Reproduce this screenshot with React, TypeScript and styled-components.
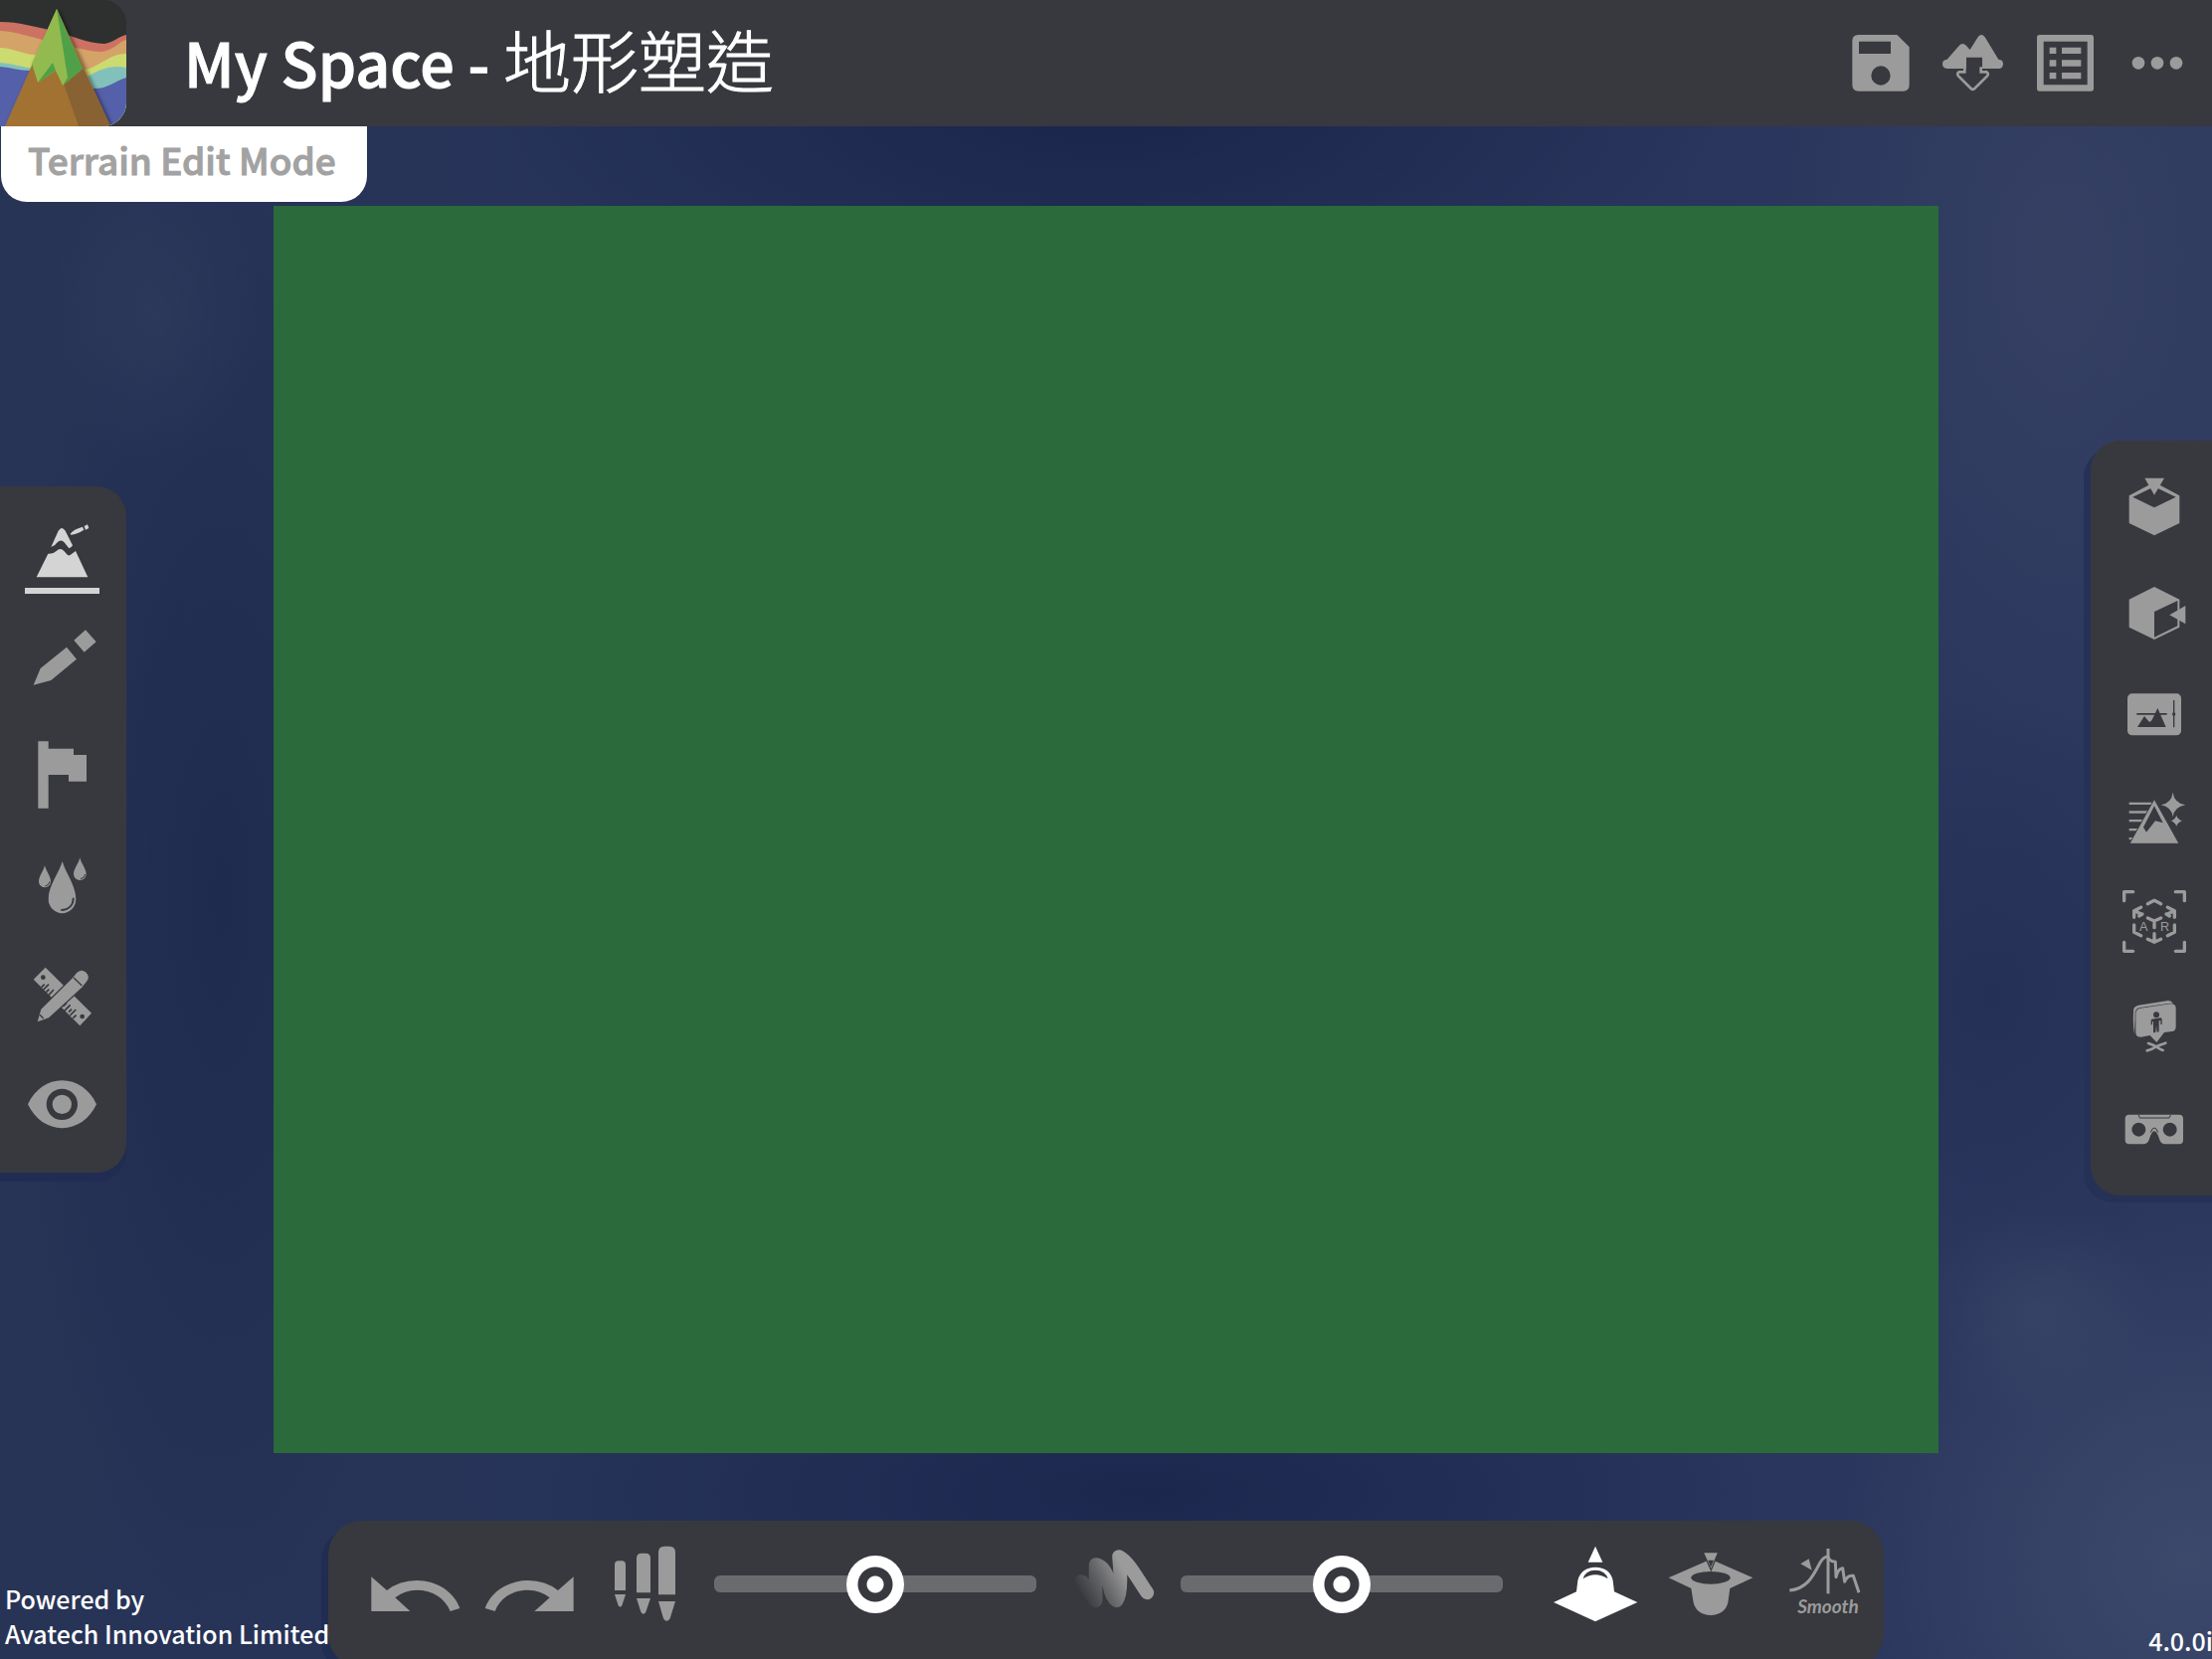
import React, { useState } from "react";
import styled, { createGlobalStyle } from "styled-components";

const PANEL = "#38393e";
const ICON = "#9b9b9b";
const SHADE = "#212c52";
const SANS = '"Noto Sans CJK TC", "Noto Sans CJK SC", "Noto Sans", sans-serif';

const GlobalStyle = createGlobalStyle`
  *, *::before, *::after { box-sizing: border-box; }
  body { margin: 0; background: #27335a; font-family: ${SANS}; }
  button { font: inherit; }
`;

const Page = styled.div`
  position: relative;
  display: flex;
  flex-direction: column;
  min-height: 100vh;
  overflow: hidden;
  background:
    radial-gradient(ellipse 120px 110px at 92% 79%, rgba(70, 80, 112, 0.35), transparent),
    radial-gradient(ellipse 360px 340px at 99% 94%, rgba(72, 84, 116, 0.6), transparent),
    radial-gradient(ellipse 300px 520px at 93% 16%, rgba(62, 72, 104, 0.5), transparent),
    radial-gradient(ellipse 110px 160px at 7% 19%, rgba(54, 64, 98, 0.45), transparent),
    radial-gradient(ellipse 620px 240px at 50% 6%, rgba(24, 36, 72, 0.9), transparent),
    radial-gradient(ellipse 220px 760px at 10% 54%, rgba(28, 40, 76, 0.8), transparent),
    radial-gradient(ellipse 240px 300px at 90% 60%, rgba(32, 44, 82, 0.6), transparent),
    radial-gradient(ellipse 620px 180px at 52% 90%, rgba(26, 38, 76, 0.9), transparent),
    linear-gradient(90deg, #273456 0%, #26325a 50%, #2c385e 100%);
`;

const Header = styled.header`
  display: flex;
  align-items: center;
  height: 127px;
  padding-right: 8px;
  background: ${PANEL};
`;

const LogoButton = styled.button`
  width: 127px;
  height: 127px;
  padding: 0;
  border: 0;
  border-radius: 0 24px 24px 0;
  overflow: hidden;
  background: #2e302f;
  cursor: pointer;
  svg { display: block; width: 100%; height: 100%; }
`;

const Title = styled.h1`
  flex: 1;
  margin: 0;
  padding: 0 0 6px 58px;
  color: #fff;
  font-size: 61px;
  font-weight: 500;
  line-height: 90px;
  white-space: pre;
  -webkit-text-stroke: 1px currentColor;
`;

const TitleMode = styled.span`
  font-size: 68px;
  font-weight: 300;
`;

const ToolButton = styled.button<{ $w: number; $h: number; $on?: boolean }>`
  flex: none;
  width: ${(p) => p.$w}px;
  height: ${(p) => p.$h}px;
  padding: 0;
  border: 0;
  background: none;
  color: ${(p) => (p.$on ? "#fff" : ICON)};
  cursor: pointer;
  svg { display: block; height: 100%; margin: 0 auto; }
`;

const HeaderTools = styled.nav`
  display: flex;
`;

const Main = styled.main`
  flex: 1;
  display: grid;
  grid-template-columns: 275px 1fr 275px;
  align-items: center;
  padding: 80px 0 68px;
`;

const Canvas = styled.section`
  align-self: stretch;
  background: #2b6a3a;
`;

const Rail = styled.nav<{ $side: "left" | "right" }>`
  display: flex;
  flex-direction: column;
  justify-self: ${(p) => (p.$side === "left" ? "start" : "end")};
  width: ${(p) => (p.$side === "left" ? 127 : 122)}px;
  padding: ${(p) => (p.$side === "left" ? "12px 0" : "16px 0 15px")};
  margin-bottom: ${(p) => (p.$side === "left" ? 0 : 24)}px;
  border-radius: ${(p) => (p.$side === "left" ? "0 30px 30px 0" : "30px 0 0 30px")};
  background: ${PANEL};
  box-shadow: ${(p) =>
    p.$side === "left" ? `0 9px 0 ${SHADE}` : `-7px 7px 0 #263157, 0 7px 0 #263157`};
`;

const Toolbar = styled.div`
  display: flex;
  align-self: center;
  width: 1564px;
  max-width: 100%;
  height: 148px;
  margin-bottom: -9px;
  padding: 23px 3px 0 30px;
  border-radius: 34px;
  background: ${PANEL};
  box-shadow: -7px 7px 0 ${SHADE};
`;

const Slider = styled.input`
  flex: 1;
  min-width: 0;
  height: 58px;
  margin: 11px 8px 0;
  appearance: none;
  background: none;
  cursor: pointer;
  &:first-of-type { margin-left: 13px; margin-right: 22px; }
  &:last-of-type { margin-right: 35px; }
  &::-webkit-slider-runnable-track {
    height: 17px;
    border-radius: 6px;
    background: #6a6b6f;
  }
  &::-webkit-slider-thumb {
    appearance: none;
    width: 58px;
    height: 58px;
    margin-top: -20px;
    border-radius: 50%;
    background: radial-gradient(circle, #fff 8px, ${PANEL} 9px, ${PANEL} 17px, #fff 18px);
  }
`;

const ModeChip = styled.div`
  position: absolute;
  top: 127px;
  left: 1px;
  padding: 0 31px 0 27px;
  height: 76px;
  border-radius: 0 0 26px 26px;
  background: #fff;
  color: #a2a2a2;
  font-size: 37px;
  font-weight: 500;
  line-height: 66px;
  white-space: nowrap;
  -webkit-text-stroke: 1px currentColor;
`;

const Credits = styled.p`
  position: absolute;
  left: 5px;
  bottom: 8px;
  margin: 0;
  color: #fff;
  font-size: 25px;
  font-weight: 500;
  line-height: 35px;
`;

const Version = styled.p`
  position: absolute;
  right: -1px;
  bottom: 1px;
  margin: 0;
  color: #fff;
  font-size: 25px;
  font-weight: 500;
  line-height: 35px;
`;

type IconProps = { box: string; children: React.ReactNode };

const Icon = ({ box, children }: IconProps) => (
  <svg viewBox={box} fill="currentColor" stroke="none" aria-hidden="true">
    {children}
  </svg>
);

const Logo = () => (
  <svg viewBox="0 0 127 127" aria-hidden="true">
    <defs>
      <filter id="peakShadow" x="-20%" y="-20%" width="140%" height="140%">
        <feDropShadow dx="2" dy="1" stdDeviation="2" floodOpacity="0.5" />
      </filter>
    </defs>
    <rect width="127" height="127" fill="#2e302f" />
    <path d="M0 22C20 22 34 27 50 30C72 35 88 44 105 44C114 43 120 36 127 35V127H0Z" fill="#cc7263" />
    <path d="M0 31C18 32 32 38 48 41C68 45 86 52 102 52C114 51 119 42 127 40V127H0Z" fill="#d4a368" />
    <path d="M0 48C12 48 22 54 34 55C54 58 70 74 90 69C104 63 114 53 127 54V127H0Z" fill="#cbdb70" />
    <path d="M0 63C12 64 22 67 32 69L88 77C102 69 112 65 127 68V127H0Z" fill="#82c1bb" />
    <path d="M0 67C12 68 20 71 30 71L92 89C108 90 114 82 127 78V127H0Z" fill="#5560aa" />
    <g filter="url(#peakShadow)">
      <path d="M57 9L111 127H5Z" fill="#a17233" />
      <path d="M57 9L84 69L111 127H79L64 84Z" fill="#886230" />
      <path d="M57 9L83 69L63 86L56 71L38 83L32 64Z" fill="#93ba4f" />
      <path d="M57 9L83 69L63 86L68 78Z" fill="#50a147" />
      <path d="M53 63L56 71L38 83Z" fill="#50a147" />
    </g>
  </svg>
);

const SaveIcon = () => (
  <Icon box="72 51 279 279">
    <path
      fillRule="evenodd"
      d="M146 105H262L299 142V256Q299 275 280 275H146Q127 275 127 256V124Q127 105 146 105ZM147 125V162H243V125ZM213 199A29 29 0 1 0 213 257A29 29 0 1 0 213 199Z"
    />
  </Icon>
);

const DownloadTerrainIcon = () => (
  <Icon box="351 51 279 279">
    <path d="M413 179L449 138Q460 126 471 138L482 150L506 112Q516 98 527 112L568 179Q582 180 582 193Q582 207 568 207H519V173H471V207H413Q399 206 399 193Q399 180 413 179Z" />
    <path
      d="M466 202V217H449Q441 222 447 229L485 267Q490 272 496 267L534 229Q540 222 532 217H515V202"
      fill="none"
      stroke="currentColor"
      strokeWidth="8"
    />
  </Icon>
);

const ListIcon = () => (
  <Icon box="630 51 279 279">
    <path
      fillRule="evenodd"
      d="M692 105H847Q855 105 855 113V267Q855 275 847 275H692Q684 275 684 267V113Q684 105 692 105ZM704 125V256H836V125Z"
    />
    <path d="M722 143H742V162H722ZM759 143H817V162H759ZM722 181H742V200H722ZM759 181H817V200H759ZM722 219H742V238H722ZM759 219H817V238H759Z" />
  </Icon>
);

const MoreIcon = () => (
  <Icon box="909 51 279 279">
    <circle cx="990" cy="190" r="19" />
    <circle cx="1047" cy="190" r="19" />
    <circle cx="1104" cy="190" r="19" />
  </Icon>
);

const SculptIcon = () => (
  <Icon box="24 63 333 333">
    <g fill="#d4d4d4">
      <path d="M154 210L176 161Q186 145 197 161L219 205Q215 213 208 214L195 197Q184 184 173 196Q167 206 154 210Z" />
      <path d="M110 301L145 230Q160 232 170 222Q182 210 193 222L203 233Q209 238 215 232L228 222L265 301Z" />
      <path d="M212 170Q221 157 249 149L253 158Q232 172 214 173ZM254 147L264 142L268 153L258 158Z" />
      <path d="M75 333H300V351H75Z" />
    </g>
  </Icon>
);

const PencilIcon = () => (
  <Icon box="24 396 333 333">
    <path d="M258 460L290 496L254 527L223 491ZM201 512L231 548L154 612L101 626L122 576Z" />
  </Icon>
);

const FlagIcon = () => (
  <Icon box="24 729 333 333">
    <path d="M115 796H146V818H222V837H261V917H207V897H146V998H115Z" />
  </Icon>
);

const DropsIcon = () => (
  <Icon box="24 -18 333 333">
    <path d="M188 78C196 110 229 150 229 192A41 42 0 0 1 146 192C146 150 180 110 188 78Z" />
    <path d="M135 90C138 106 153 122 153 139A18 18 0 0 1 117 139C117 122 132 106 135 90Z" />
    <path d="M241 67C244 84 260 100 260 117A19 18 0 0 1 222 117C222 100 238 84 241 67Z" />
    <g fill="none" stroke={PANEL}>
      <path d="M221 188C221 210 207 224 184 225" strokeWidth="6" />
      <path d="M150 139Q149 150 136 153M257 117Q255 129 243 131" strokeWidth="3" />
    </g>
  </Icon>
);

const MeasureIcon = () => (
  <Icon box="24 315 333 333">
    <path d="M137 398L276 536L241 574L101 434Z" />
    <g fill="none" stroke={PANEL} strokeWidth="5">
      <path d="M125 458L134 449M131 465L147 449M139 473L148 464M147 481L162 465M190 516L201 505M194 529L212 511M207 533L216 524M211 543L229 525M220 551L230 542" />
    </g>
    <circle cx="130" cy="428" r="7" fill={PANEL} />
    <circle cx="248" cy="546" r="7" fill={PANEL} />
    <path
      d="M219 430L231 415Q244 401 258 412Q272 425 263 438L247 458L147 550L113 562L124 524Z"
      stroke={PANEL}
      strokeWidth="8"
      paintOrder="stroke"
    />
    <path d="M222 429L247 453M120 541L131 552" stroke={PANEL} strokeWidth="4" />
  </Icon>
);

const EyeIcon = () => (
  <Icon box="24 648 333 333">
    <path d="M84 811C105 765 145 739 187 739C230 739 270 765 291 811C270 856 230 883 187 883C145 883 105 856 84 811Z" />
    <circle cx="187" cy="811" r="38" fill="none" stroke={PANEL} strokeWidth="18" />
  </Icon>
);

const BoxTopIcon = () => (
  <Icon box="81 87 312 312">
    <path
      fillRule="evenodd"
      d="M246 164L322 205V288L246 325L170 288V205ZM246 178L181 209L246 241L311 209Z"
    />
    <path d="M217 152H276L246 203Z" />
  </Icon>
);

const BoxSideIcon = () => (
  <Icon box="81 399 312 312">
    <path
      fillRule="evenodd"
      d="M246 480L322 518V602L246 639L170 602V518ZM246 555V632L316 598V522Z"
    />
    <path d="M340 537V592L292 565Z" />
  </Icon>
);

const SceneIcon = () => (
  <Icon box="81 711 312 312">
    <rect x="165" y="802" width="162" height="126" rx="14" />
    <g fill={PANEL}>
      <path d="M195 903L216 870L229 886Q234 890 239 881L256 846L281 903Z" />
      <path d="M193 861H284V866H193ZM303 822H307V904H303Z" />
      <circle cx="305" cy="864" r="5" />
    </g>
  </Icon>
);

const GenerateIcon = () => (
  <Icon box="81 -117 312 312">
    <path d="M170 -10H242V-3H170ZM170 16H228V23H170ZM170 42H216V49H170ZM170 69H204V76H170ZM170 96H194V103H170Z" />
    <path d="M246 -20L321 115H171Z" stroke={PANEL} strokeWidth="3" />
    <path d="M246 1L272 52L249 46L222 80L213 65Z" fill={PANEL} />
    <path d="M302 -40Q306 -8 340 -2Q306 4 302 34Q298 4 266 -2Q298 -8 302 -40Z" />
    <path d="M313 24Q315 42 334 46Q315 50 313 68Q310 50 292 46Q310 42 313 24Z" stroke={PANEL} strokeWidth="3" />
  </Icon>
);

const ArIcon = () => (
  <Icon box="81 195 312 312">
    <g fill="none" stroke="currentColor" strokeLinejoin="round" strokeLinecap="round" strokeWidth="10">
      <path d="M155 287V260H182M310 260H337V287M155 412V439H182M310 439H337V412" />
      <path d="M226 296L246 286L266 296M185 360V382L206 392M307 360V382L286 392M246 386V410M226 403L246 412L266 403M246 368V348L226 339M246 348L266 339" />
      <path d="M185 337V317L206 307M185 317L209 328M200 333L210 327M307 337V317L286 307M307 317L283 328M292 333L282 327" />
    </g>
    <g fontFamily="Liberation Sans, sans-serif" fontWeight="400" fontSize="38" textAnchor="middle">
      <text x="214" y="378">A</text>
      <text x="278" y="378">R</text>
    </g>
  </Icon>
);

const AvatarSignIcon = () => (
  <Icon box="81 507 312 312">
    <path d="M186 690Q180 655 184 612Q187 604 198 602L288 588Q298 588 302 596L296 610L200 620Q188 624 189 640Z" />
    <path
      d="M204 611L294 598Q310 597 311 610V668Q310 680 299 681L276 684L253 714L233 693L206 698Q191 698 190 686V627Q191 613 204 611Z"
      stroke={PANEL}
      strokeWidth="4"
      paintOrder="stroke"
    />
    <g fill={PANEL}>
      <circle cx="252" cy="631" r="9" />
      <path d="M238 644L266 640Q269 641 269 646V660H265V648L260 649V682L254 683L252 664L250 684L243 685V651L240 652V661H236V648Z" />
    </g>
    <path d="M228 717Q244 722 253 728Q265 736 272 738M280 716Q260 722 250 728Q238 736 224 739" fill="none" stroke="currentColor" strokeWidth="8" strokeLinecap="round" />
  </Icon>
);

const HeadsetIcon = () => (
  <Icon box="81 819 312 312">
    <path
      fillRule="evenodd"
      d="M171 932H321Q333 932 333 944V1009Q333 1021 321 1021H278Q267 1021 262 1008Q254 982 246 982Q238 982 230 1008Q225 1021 213 1021H171Q158 1021 158 1009V944Q158 932 171 932ZM199 956A21 21 0 1 0 199 998A21 21 0 1 0 199 956ZM293 956A21 21 0 1 0 293 998A21 21 0 1 0 293 956Z"
    />
    <path d="M199 933L202 942H291L295 933M235 986Q239 972 246 972Q253 972 257 986" fill="none" stroke={PANEL} strokeWidth="3" />
  </Icon>
);

const UndoIcon = () => (
  <Icon box="180 126 345 240">
    <path d="M220 226L267 267Q305 237 357 237C417 237 470 272 487 321L458 330C442 290 405 266 357 266Q320 266 292 289L337 330H220Z" />
  </Icon>
);

const RedoIcon = () => (
  <Icon box="525 126 345 240">
    <path d="M830 226L783 267Q745 237 693 237C633 237 580 272 563 321L593 330C608 290 645 266 693 266Q730 266 758 289L712 330H830Z" />
  </Icon>
);

const BrushSizeIcon = () => (
  <Icon box="870 126 345 240">
    <path d="M954 190Q954 178 966 178H975Q987 178 987 190V267H954ZM954 279H987L976 313Q971 320 965 313Z" />
    <path d="M1020 170Q1020 155 1035 155H1047Q1062 155 1062 170V274H1020ZM1020 291H1062L1048 332Q1041 344 1033 332Z" />
    <path d="M1086 152Q1086 134 1104 134H1119Q1137 134 1137 152V280H1086ZM1086 300H1137L1121 352Q1111 367 1101 352Z" />
  </Icon>
);

const BrushStrengthIcon = () => (
  <Icon box="0 36 345 240">
    <defs>
      <linearGradient id="strokeFade" gradientUnits="userSpaceOnUse" x1="68" y1="190" x2="200" y2="120">
        <stop offset="0" stopColor="#9b9b9b" stopOpacity="0" />
        <stop offset="0.5" stopColor="#9b9b9b" stopOpacity="0.45" />
        <stop offset="1" stopColor="#9b9b9b" />
      </linearGradient>
    </defs>
    <path
      d="M70 150C84 166 100 192 113 208C113 180 112 130 113 99C136 104 150 130 154 160C158 185 164 200 176 208C194 180 186 110 183 75C215 92 240 145 268 184"
      fill="none"
      stroke="url(#strokeFade)"
      strokeWidth="41"
      strokeLinecap="round"
      strokeLinejoin="round"
    />
  </Icon>
);

const RaiseIcon = () => (
  <Icon box="78 126 345 240">
    <path d="M252 134L274 182H230Z" />
    <path d="M126 303L195 271L199 238C204 212 225 197 252 197C280 197 301 212 305 238L309 271L379 303L252 361Z" />
    <path d="M215 232Q222 206 252 206Q282 206 290 232Q270 220 252 220Q234 220 215 232Z" fill={PANEL} />
  </Icon>
);

const LowerIcon = () => (
  <Icon box="423 126 345 240">
    <path d="M600 173L727 229L658 261L652 304C647 328 627 342 600 342C573 342 553 328 548 304L541 261L473 229Z" />
    <ellipse cx="600" cy="229" rx="59" ry="19" fill={PANEL} />
    <path d="M577 152H623L601 206Z" stroke={PANEL} strokeWidth="4" />
    <path d="M592 176H609L600 197Z" fill={PANEL} />
  </Icon>
);

const SmoothIcon = () => (
  <Icon box="768 126 345 240">
    <g fill="none" stroke="currentColor" strokeWidth="9" strokeLinejoin="round">
      <path d="M838 267C895 262 912 215 930 183Q942 163 954 166Q958 180 976 181L978 227Q984 201 998 200L1004 241Q1012 220 1030 223L1047 274" />
      <path d="M954 141V277" />
    </g>
    <path d="M871 187L896 172L905 206Z" />
    <text
      x="954"
      y="337"
      textAnchor="middle"
      fontFamily="Lato, sans-serif"
      fontStyle="italic"
      fontWeight="700"
      fontSize="57"
    >
      Smooth
    </text>
  </Icon>
);

type Tool = { label: string; Glyph: () => React.ReactElement };

const headerTools: Tool[] = [
  { label: "Save", Glyph: SaveIcon },
  { label: "Download terrain", Glyph: DownloadTerrainIcon },
  { label: "List", Glyph: ListIcon },
  { label: "More", Glyph: MoreIcon },
];

const editTools: Tool[] = [
  { label: "Sculpt", Glyph: SculptIcon },
  { label: "Paint", Glyph: PencilIcon },
  { label: "Flag", Glyph: FlagIcon },
  { label: "Water", Glyph: DropsIcon },
  { label: "Measure", Glyph: MeasureIcon },
  { label: "View", Glyph: EyeIcon },
];

const viewTools: Tool[] = [
  { label: "Top view", Glyph: BoxTopIcon },
  { label: "Side view", Glyph: BoxSideIcon },
  { label: "Scene", Glyph: SceneIcon },
  { label: "Generate", Glyph: GenerateIcon },
  { label: "AR", Glyph: ArIcon },
  { label: "Avatar", Glyph: AvatarSignIcon },
  { label: "VR", Glyph: HeadsetIcon },
];

const historyTools: Tool[] = [
  { label: "Undo", Glyph: UndoIcon },
  { label: "Redo", Glyph: RedoIcon },
  { label: "Brush size", Glyph: BrushSizeIcon },
];

const strengthTools: Tool[] = [{ label: "Brush strength", Glyph: BrushStrengthIcon }];

const shapeTools: Tool[] = [
  { label: "Raise", Glyph: RaiseIcon },
  { label: "Lower", Glyph: LowerIcon },
  { label: "Smooth", Glyph: SmoothIcon },
];

type ToolSetProps = { tools: Tool[]; w: number; h: number; active?: string; onPick?: (label: string) => void };

const ToolSet = ({ tools, w, h, active, onPick }: ToolSetProps) => (
  <>
    {tools.map(({ label, Glyph }) => (
      <ToolButton
        key={label}
        type="button"
        aria-label={label}
        $w={w}
        $h={h}
        $on={label === active}
        onClick={() => onPick?.(label)}
      >
        <Glyph />
      </ToolButton>
    ))}
  </>
);

export default function App() {
  const [size, setSize] = useState(50);
  const [strength, setStrength] = useState(50);
  const [shape, setShape] = useState("Raise");

  return (
    <>
      <GlobalStyle />
      <Page>
        <Header>
          <LogoButton type="button" aria-label="Home">
            <Logo />
          </LogoButton>
          <Title>
            My Space - <TitleMode>地形塑造</TitleMode>
          </Title>
          <HeaderTools>
            <ToolSet tools={headerTools} w={93} h={93} />
          </HeaderTools>
        </Header>
        <ModeChip>Terrain Edit Mode</ModeChip>
        <Main>
          <Rail $side="left">
            <ToolSet tools={editTools} w={127} h={111} />
          </Rail>
          <Canvas aria-label="Terrain" />
          <Rail $side="right">
            <ToolSet tools={viewTools} w={122} h={104} />
          </Rail>
        </Main>
        <Toolbar>
          <ToolSet tools={historyTools} w={115} h={80} />
          <Slider
            type="range"
            aria-label="Brush size"
            value={size}
            onChange={(e) => setSize(Number(e.target.value))}
          />
          <ToolSet tools={strengthTools} w={115} h={80} />
          <Slider
            type="range"
            aria-label="Brush strength"
            value={strength}
            onChange={(e) => setStrength(Number(e.target.value))}
          />
          <ToolSet tools={shapeTools} w={115} h={80} active={shape} onPick={setShape} />
        </Toolbar>
        <Credits>
          Powered by
          <br />
          Avatech Innovation Limited
        </Credits>
        <Version>4.0.0i</Version>
      </Page>
    </>
  );
}
